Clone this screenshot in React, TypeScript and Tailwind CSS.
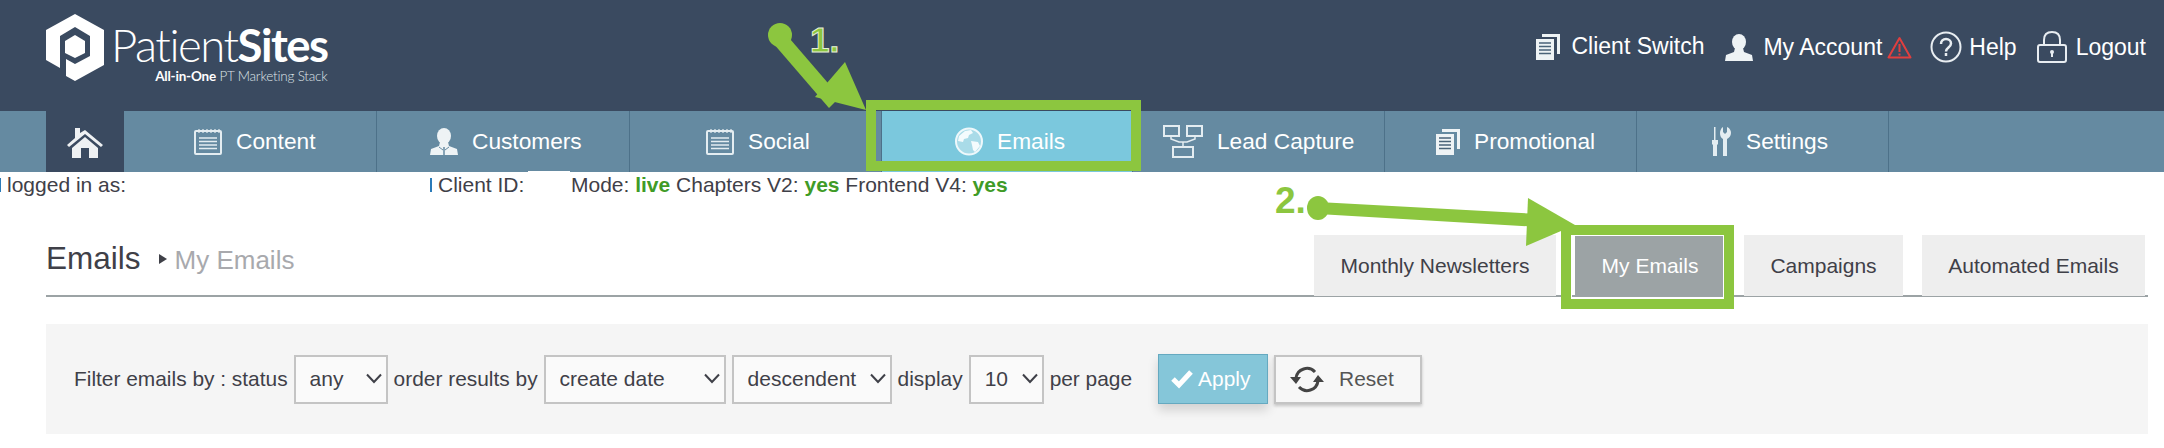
import React from 'react';

const IconNotepad = () => (
  <svg width="28" height="27" viewBox="0 0 28 27" fill="none" stroke="#e4edf1" strokeWidth="2">
    <rect x="1" y="3" width="26" height="23" rx="1" />
    <path d="M5 1v4M9 1v4M13 1v4M17 1v4M21 1v4M25 1v4" strokeWidth="1.2" />
    <path d="M5 10h18M5 13.5h18M5 17h18M5 20.5h18" strokeWidth="1.6" />
  </svg>
);

const IconPerson = ({ suit }: { suit?: boolean }) => (
  <svg width="28" height="27" viewBox="0 0 28 27" fill="#eef3f5">
    <ellipse cx="14" cy="8" rx="7" ry="8" />
    <path d="M10 14h8l1 4 8 3 1 6H0l1-6 8-3z" />
    {suit && <path d="M14 19v8" stroke="#658aa1" strokeWidth="1.5" />}
    {suit && <path d="M9 19l4 3M19 19l-4 3" stroke="#658aa1" strokeWidth="1" />}
  </svg>
);

const IconGlobe = () => (
  <svg width="28" height="29" viewBox="0 0 28 29">
    <circle cx="14" cy="14.5" r="13" fill="#a9dbe8" stroke="#eef8fb" strokeWidth="2" />
    <path d="M10 4l6-1 2 3-4 2-1 3-4 1-1 3-5-1 1-5zM16 14l7 1 2 4-5 6-2-2-1-5z" fill="#f4fbfd" />
  </svg>
);

const IconNetwork = () => (
  <svg width="40" height="33" viewBox="0 0 40 33" fill="none" stroke="#e4edf1" strokeWidth="2">
    <rect x="1" y="1" width="15" height="10" />
    <rect x="24" y="1" width="15" height="10" />
    <rect x="10" y="22" width="20" height="10" />
    <path d="M8 11v3l8 3h8l8-3v-3M20 17v5" strokeWidth="1.5" />
  </svg>
);

const IconDocs = ({ w = 24, h = 26 }: { w?: number; h?: number }) => (
  <svg width={w} height={h} viewBox="0 0 24 26" fill="#eef3f5">
    <path d="M6 0h18v20h-3V3H6z" />
    <rect x="0" y="5" width="18" height="21" />
    <path d="M3 9h12M3 12.5h12M3 16h12M3 19.5h12" stroke="#4a6378" strokeWidth="1.5" />
  </svg>
);

const IconTools = () => (
  <svg width="21" height="29" viewBox="0 0 21 29" fill="#e4edf1">
    <rect x="3" y="0" width="1.5" height="13" />
    <path d="M1 13h6v4l-1 1v11H2V18l-1-1z" />
    <path d="M12 0v5l2 2 2-2V0c3 1 4 4 4 6 0 3-2 5-4 6v17h-4V12C10 11 9 9 9 6c0-2 1-5 3-6z" />
  </svg>
);

const IconHome = () => (
  <svg width="36" height="32" viewBox="0 0 36 32" fill="#eef1f3">
    <path d="M18 4L36 19l-2 2L18 8 2 21l-2-2 8-7V2h5v5z" />
    <path d="M5 22L18 11l13 11v10h-9V22h-8v10H5z" />
  </svg>
);

const IconWarning = () => (
  <svg width="25" height="23" viewBox="0 0 25 23" fill="none" stroke="#e03f3f" strokeWidth="2">
    <path d="M12.5 2L1.5 21.5h22z" strokeLinejoin="round" />
    <path d="M12.5 8v8M12.5 17.5v2" />
  </svg>
);

const IconHelp = () => (
  <svg width="32" height="32" viewBox="0 0 32 32" fill="none" stroke="#e8edf1" strokeWidth="2">
    <circle cx="16" cy="16" r="14.5" />
    <path d="M11 13c0-3 2-5 5-5s5 2 5 4.500c0 4-5 4-5 8" strokeWidth="2.5" />
    <path d="M16 22v3" strokeWidth="2.5" />
  </svg>
);

const IconLock = () => (
  <svg width="30" height="32" viewBox="0 0 30 32" fill="none" stroke="#e8edf1" strokeWidth="2">
    <rect x="1" y="14" width="28" height="17" rx="2" />
    <path d="M7 14V9c0-5 3-8 8-8s8 3 8 8v5" />
    <circle cx="15" cy="21" r="2" fill="#e8edf1" stroke="none" />
    <path d="M15 21v5" />
  </svg>
);

const IconReset = () => (
  <svg width="34" height="29" viewBox="0 0 34 29" fill="none" stroke="#444444" strokeWidth="3">
    <path d="M6 13a11 11 0 0 1 19-6" />
    <path d="M28 16a11 11 0 0 1-19 6" />
    <path d="M0 12h11l-5 7zM34 17H23l5-7z" fill="#444444" stroke="none" />
  </svg>
);

const Logo = () => (
  <svg width="58" height="67" viewBox="0 0 58 67" fill="#ffffff">
    <path d="M0 16L29 0l29 16v35L29 67l-9-5V45l9 5 15-8V22l-15-9-15 9v32L0 46z" />
    <path d="M29 21l10 6v12l-10 5-10-5V27z" />
  </svg>
);

const navItems = [
  { label: 'Content', icon: <IconNotepad />, cls: 'w-[253px] pl-[70px]' },
  { label: 'Customers', icon: <IconPerson suit />, cls: 'w-[253px] pl-[53px]' },
  { label: 'Social', icon: <IconNotepad />, cls: 'w-[252px] pl-[76px]' },
  { label: 'Emails', icon: <IconGlobe />, cls: 'w-[251px] pl-[73px] bg-[#7bc8dd]' },
  { label: 'Lead Capture', icon: <IconNetwork />, cls: 'w-[252px] pl-[30px]' },
  { label: 'Promotional', icon: <IconDocs />, cls: 'w-[252px] pl-[51px]' },
  { label: 'Settings', icon: <IconTools />, cls: 'w-[252px] pl-[74px]' },
];

const Select = ({ value, width }: { value: string; width: string }) => (
  <div className={`relative h-[49px] ${width}`}>
    <select
      defaultValue={value}
      className="h-full w-full appearance-none border-2 border-[#c4c4c4] bg-[#fafafa] pl-[14px] text-[21px] text-[#3f4048] outline-none"
    >
      <option>{value}</option>
    </select>
    <svg
      className="pointer-events-none absolute right-[6px] top-[18px]"
      width="16"
      height="11"
      viewBox="0 0 16 11"
      fill="none"
      stroke="#3f4048"
      strokeWidth="2"
    >
      <path d="M1 1.500l7 7.500 7-7.500" />
    </svg>
  </div>
);

export default function App() {
  return (
    <div className="relative h-[448px] w-full overflow-hidden bg-white font-['Liberation_Sans',Arial,sans-serif] text-[20.900px] text-[#3f4048]">
      {/* top bar */}
      <header className="flex h-[111px] items-start justify-between bg-[#3a4a60] pl-[46px] pr-[18px]">
        <div className="flex pt-[14px]">
          <Logo />
          <div className="ml-[7px] mt-[7px] flex flex-col items-end font-['Lato',sans-serif] text-white">
            <div className="text-[45.500px] font-light leading-[48px] tracking-[-1.5px]">
              Patient<span className="font-bold">Sites</span>
            </div>
            <div className="text-[13.500px] font-light leading-[14px] tracking-[-0.2px] text-[#dfe4e8]">
              <span className="font-bold text-white">All-in-One</span> PT Marketing Stack
            </div>
          </div>
        </div>
        <div className="flex items-center pt-[31px] text-[23px] leading-[32px] text-white">
          <IconDocs />
          <span className="ml-[12px] mr-[21px] -mt-[3px]">Client Switch</span>
          <IconPerson />
          <span className="ml-[10px] mr-[5px]">My Account</span>
          <IconWarning />
          <span className="ml-[18px]"><IconHelp /></span>
          <span className="ml-[7px] mr-[20px]">Help</span>
          <IconLock />
          <span className="ml-[9px]">Logout</span>
        </div>
      </header>

      {/* main nav */}
      <nav className="flex h-[61px] bg-[#658aa1] text-[22.700px] text-white">
        <div className="ml-[46px] flex w-[78px] items-center justify-center bg-[#3a4a60]">
          <IconHome />
        </div>
        {navItems.map((item) => (
          <div
            key={item.label}
            className={`flex items-center gap-[14px] border-r border-[#4d7189] ${item.cls}`}
          >
            {item.icon}
            <span>{item.label}</span>
          </div>
        ))}
      </nav>

      {/* session info */}
      <div className="flex h-[24px] items-center pt-[1px] text-[21px] leading-[24px]">
        <span className="h-[14px] w-[1px] bg-[#2b7bb9]" />
        <span className="ml-[6px] w-[423px]">logged in as:</span>
        <span className="h-[14px] w-[2px] bg-[#2b7bb9]" />
        <span className="ml-[6px] w-[133px]">Client ID:</span>
        <span>
          Mode: <b className="text-[#3f9b27]">live</b> Chapters V2: <b className="text-[#3f9b27]">yes</b> Frontend V4:{' '}
          <b className="text-[#3f9b27]">yes</b>
        </span>
      </div>

      {/* page title and tabs */}
      <div className="ml-[46px] mr-[16px] flex h-[101px] items-end justify-between border-b-2 border-[#9ca3a5] pr-[3px]">
        <div className="mb-[15px] flex items-baseline">
          <span className="text-[31.500px] leading-[40px]">Emails</span>
          <span className="ml-[18px] mr-[8px] inline-block h-0 w-0 -translate-y-[5px] border-y-[5px] border-l-[8px] border-y-transparent border-l-[#3f4048]" />
          <span className="text-[26px] leading-[40px] text-[#a8a9ad]">My Emails</span>
        </div>
        <div className="-mb-[1px] flex gap-[19px] text-[21px]">
          <div className="flex h-[61px] w-[242px] items-center justify-center bg-[#eeeeee] pt-[1px]">Monthly Newsletters</div>
          <div className="flex h-[61px] w-[150px] items-center justify-center bg-[#9ca3a5] pt-[1px] text-white">My Emails</div>
          <div className="flex h-[61px] w-[159px] items-center justify-center bg-[#eeeeee] pt-[1px]">Campaigns</div>
          <div className="flex h-[61px] w-[223px] items-center justify-center bg-[#eeeeee] pt-[1px]">Automated Emails</div>
        </div>
      </div>

      {/* filters */}
      <div className="ml-[46px] mr-[16px] mt-[27px] flex h-[110px] items-center gap-[6px] bg-[#f5f5f5] pl-[28px]">
        <span>Filter emails by : status</span>
        <Select value="any" width="w-[94px]" />
        <span>order results by</span>
        <Select value="create date" width="w-[182px]" />
        <Select value="descendent" width="w-[160px]" />
        <span>display</span>
        <Select value="10" width="w-[75px]" />
        <span>per page</span>
        <button className="ml-[20px] flex h-[50px] w-[110px] items-center gap-[5px] border border-[#65a9c0] bg-[#85c6d9] pl-[12px] text-white shadow-[0_6px_10px_rgba(0,0,0,0.15)]">
          <svg width="22" height="20" viewBox="0 0 22 20" fill="none" stroke="#ffffff" strokeWidth="5">
            <path d="M2 10l6 6L20 3" />
          </svg>
          Apply
        </button>
        <button className="flex h-[49px] w-[148px] items-center gap-[15px] border-2 border-[#c4c4c4] bg-[#f7f7f7] pl-[14px] text-[#555555] shadow-[0_2px_3px_rgba(0,0,0,0.2)]">
          <IconReset />
          Reset
        </button>
      </div>

      {/* annotations */}
      <svg className="pointer-events-none absolute left-0 top-0" width="2164" height="448" fill="#8cc63f">
        <ellipse cx="780" cy="35" rx="12" ry="12" />
        <path d="M773 43l11-11 56 65-11 11z" />
        <path d="M866 110l-21-48-30 35z" />
        <ellipse cx="1318" cy="208" rx="11" ry="12" />
        <path d="M1318 202l222 12v13l-222-13z" />
        <path d="M1575 225l-47-27-2 48z" />
      </svg>
      <span className="absolute left-[810px] top-[20px] text-[35px] font-bold leading-[40px] text-[#8cc63f] [-webkit-text-stroke:1px_#e6efd6]">
        1.
      </span>
      <span className="absolute left-[1275px] top-[181px] text-[37px] font-bold leading-[40px] text-[#8cc63f]">2.</span>
      <div className="absolute left-[866px] top-[100px] h-[71px] w-[275px] border-[10px] border-[#8cc63f]" />
      <div className="absolute left-[1561px] top-[225px] h-[84px] w-[173px] border-[10px] border-[#8cc63f] shadow-[inset_0_0_0_1px_#ffffff]" />
      <div className="absolute left-[528px] top-[171px] h-[15px] w-[42px] bg-white" />
    </div>
  );
}
